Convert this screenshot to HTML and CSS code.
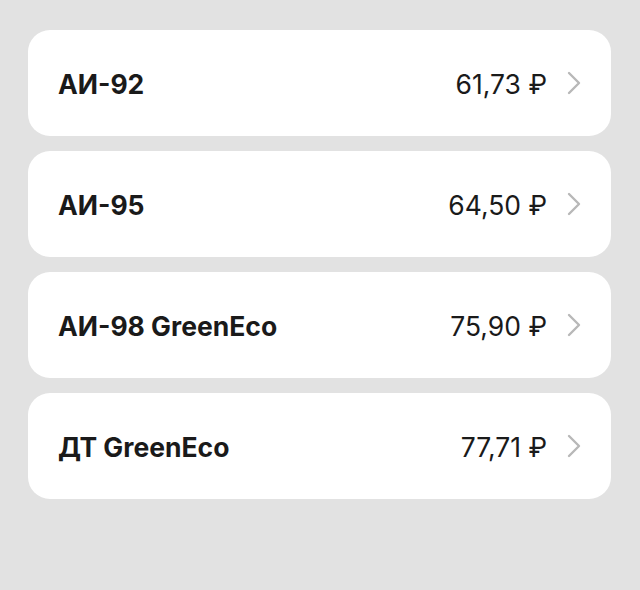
FILE: index.html
```
<!DOCTYPE html>
<html lang="ru">
<head>
<meta charset="utf-8">
<link rel="stylesheet" href="styles.css">
</head>
<body>
<div class="list">
  <div class="card"><span class="name">АИ-92</span><span class="price">61,73 ₽</span><svg class="chev" viewBox="0 0 14 24"><path d="M2 2 L12 12 L2 22" /></svg></div>
  <div class="card"><span class="name">АИ-95</span><span class="price">64,50 ₽</span><svg class="chev" viewBox="0 0 14 24"><path d="M2 2 L12 12 L2 22" /></svg></div>
  <div class="card"><span class="name">АИ-98 GreenEco</span><span class="price">75,90 ₽</span><svg class="chev" viewBox="0 0 14 24"><path d="M2 2 L12 12 L2 22" /></svg></div>
  <div class="card"><span class="name">ДТ GreenEco</span><span class="price">77,71 ₽</span><svg class="chev" viewBox="0 0 14 24"><path d="M2 2 L12 12 L2 22" /></svg></div>
</div>
</body>
</html>
```
FILE: styles.css
```
html, body {
  margin: 0;
  padding: 0;
  background: #e2e2e2;
  height: 100%;
}
body {
  font-family: Inter, "Open Sans", sans-serif;
  color: #1a1a1a;
}
.list {
  display: flex;
  flex-direction: column;
  gap: 15px;
  padding: 30px 29px 0 28px;
}
.card {
  background: #ffffff;
  border-radius: 22px;
  height: 106px;
  display: flex;
  align-items: center;
  padding: 2px 30px 0 30px;
  box-sizing: border-box;
}
.name {
  flex: 1;
  font-size: 26.5px;
  font-weight: 650;
}
.price {
  font-size: 26.5px;
  font-weight: 400;
}
.chev {
  width: 14px;
  height: 24px;
  margin-left: 20px;
  margin-bottom: 2px;
  fill: none;
  stroke: #b8b8b8;
  stroke-width: 2.4;
  stroke-linecap: round;
  stroke-linejoin: round;
}
```
